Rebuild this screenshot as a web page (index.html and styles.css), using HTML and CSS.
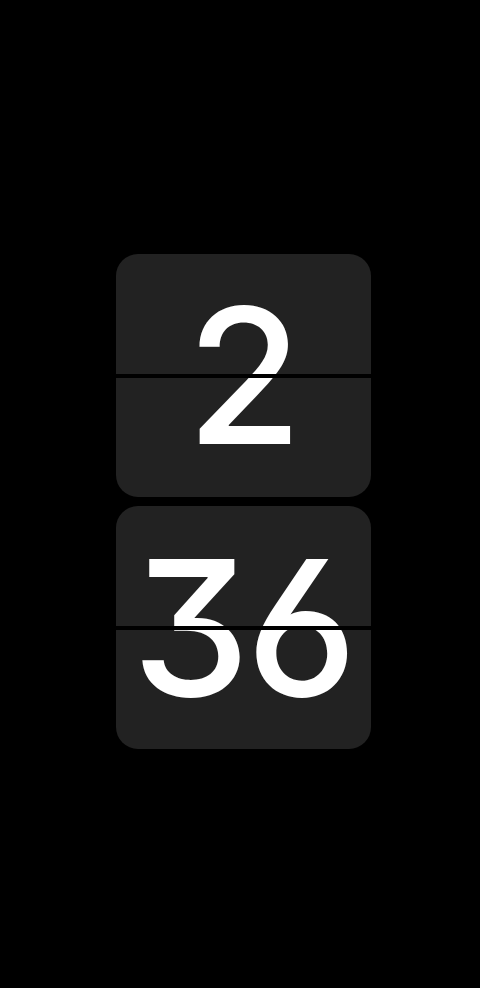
FILE: index.html
```html
<!DOCTYPE html>
<html>
<head>
<meta charset="utf-8">
<link rel="stylesheet" href="styles.css">
</head>
<body>
<main class="clock">
  <div class="card"><span class="digits">2</span></div>
  <div class="card"><span class="digits">36</span></div>
</main>
</body>
</html>
```
FILE: styles.css
```css
html, body {
  margin: 0;
  padding: 0;
  background: #000;
}
body {
  width: 480px;
  height: 988px;
  overflow: hidden;
}
.clock {
  display: flex;
  flex-direction: column;
  gap: 9px;
  padding-top: 254px;
  padding-left: 116px;
}
.card {
  position: relative;
  width: 255px;
  height: 243px;
  border-radius: 22px;
  background: #222222;
  display: flex;
  align-items: center;
  justify-content: center;
  overflow: hidden;
}
.digits {
  font-family: Inter, "Noto Sans", sans-serif;
  font-feature-settings: "cv09" 1, "cv03" 1;
  font-size: 188px;
  font-weight: 500;
  line-height: 1;
  color: #fff;
  letter-spacing: -4px;
  padding-right: 2px;
}
.card::after {
  content: "";
  position: absolute;
  left: 0;
  right: 0;
  top: 120px;
  height: 4px;
  background: #000;
}
```
